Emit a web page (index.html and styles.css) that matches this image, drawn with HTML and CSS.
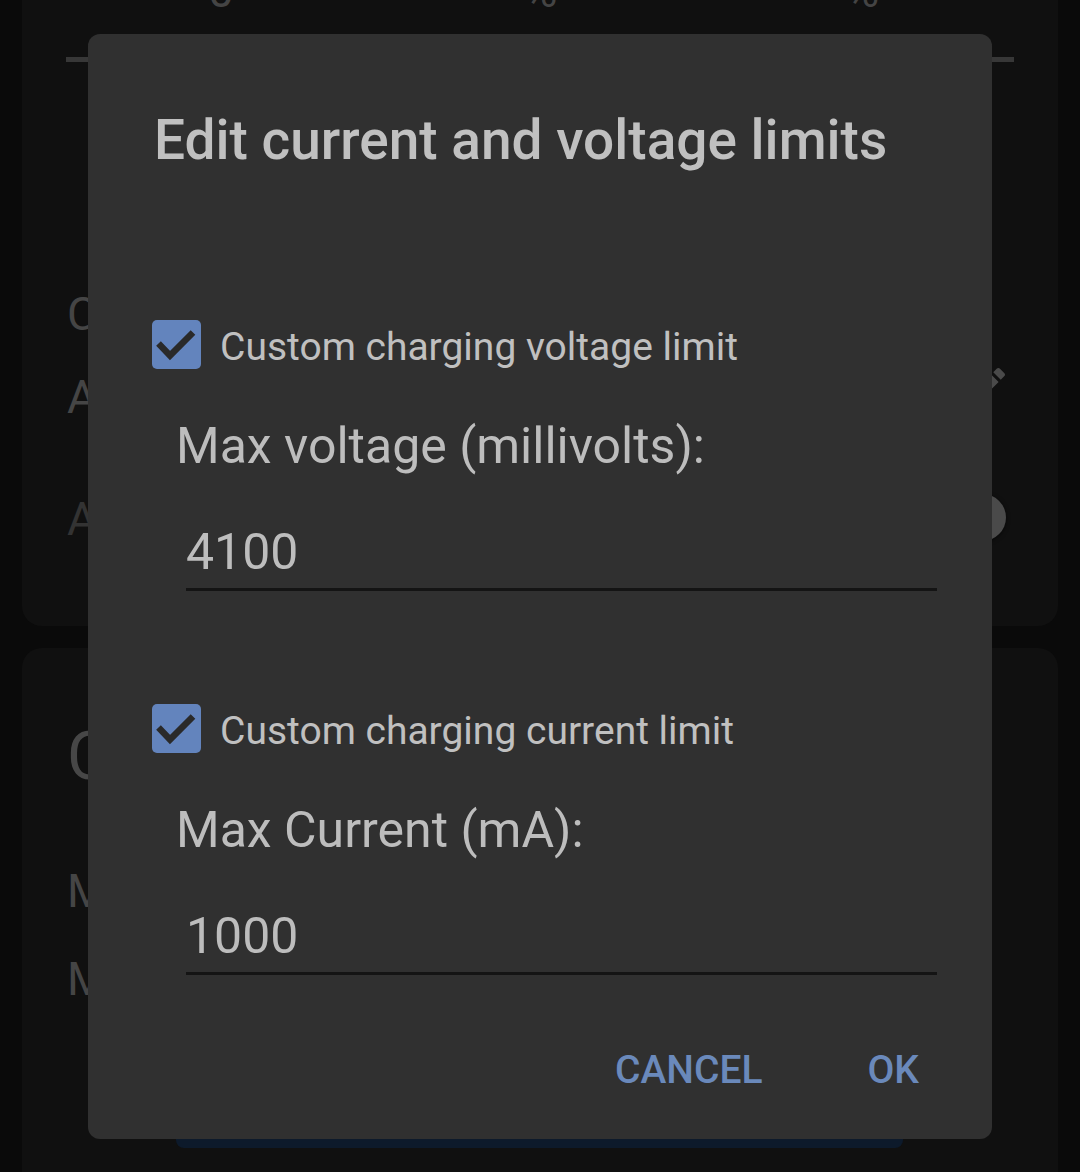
FILE: index.html
```html
<!DOCTYPE html>
<html lang="en">
<head>
<meta charset="utf-8">
<title>Edit current and voltage limits</title>
<link rel="stylesheet" href="styles.css">
</head>
<body>
<div class="page">
  <section class="card card-top">
    <div class="stats">
      <span class="stat s1">0</span>
      <span class="stat s2">%</span>
      <span class="stat s3">%</span>
    </div>
    <div class="divider"></div>
    <div class="row r1"><span>Charge limit</span></div>
    <div class="row r2">
      <span>Automatic limit</span>
      <svg class="edit-icon" viewBox="0 0 24 24" width="48" height="48"><path d="M3 17.25V21h3.75L17.81 9.94l-3.75-3.75L3 17.25zM20.71 7.04c.39-.39.39-1.02 0-1.41l-2.34-2.34c-.39-.39-1.02-.39-1.41 0l-1.830 1.83 3.75 3.75 1.83-1.83z" fill="#4a4a4a"/></svg>
    </div>
    <div class="row r3 disabled">
      <span>Auto-resume charging</span>
      <span class="knob"></span>
    </div>
  </section>

  <section class="card card-bottom">
    <h2 class="heading">Current and voltage</h2>
    <div class="row r4"><span>Max voltage</span></div>
    <div class="row r5"><span>Max current</span></div>
    <div class="blue-btn"></div>
  </section>
</div>

<div class="dialog">
  <h1 class="title">Edit current and voltage limits</h1>

  <div class="check-row first">
    <span class="box"><svg viewBox="0 0 49 49" width="49" height="49"><path d="M6.5 23.5 L18 35.5 L41 12.5" fill="none" stroke="#2a2a2a" stroke-width="6.5"/></svg></span>
    <span class="check-label">Custom charging voltage limit</span>
  </div>
  <div class="field-label">Max voltage (millivolts):</div>
  <div class="field">4100</div>

  <div class="check-row second">
    <span class="box"><svg viewBox="0 0 49 49" width="49" height="49"><path d="M6.5 23.5 L18 35.5 L41 12.5" fill="none" stroke="#2a2a2a" stroke-width="6.5"/></svg></span>
    <span class="check-label">Custom charging current limit</span>
  </div>
  <div class="field-label">Max Current (mA):</div>
  <div class="field">1000</div>

  <div class="actions">
    <span class="action cancel">CANCEL</span>
    <span class="action ok">OK</span>
  </div>
</div>
</body>
</html>
```

FILE: styles.css
```css
html, body {
  margin: 0;
  padding: 0;
  background: #0a0a0a;
  height: 1172px;
  overflow: hidden;
  font-family: Roboto, "Noto Sans", sans-serif;
}

.page {
  padding: 0 22px;
}

.card {
  background: #101010;
}

.card-top {
  height: 626px;
  border-radius: 0 0 20px 20px;
  overflow: hidden;
}

.stats {
  display: flex;
  height: 46px;
  margin-top: -32px;
  font-size: 46px;
  line-height: 46px;
  color: #444;
  position: relative;
}

.stat.s1 { margin-left: 186px; }
.stat.s2 { margin-left: 290px; }
.stat.s3 { margin-left: 288px; }

.divider {
  height: 5px;
  margin: 43px 44px 0;
  background: #373737;
}

.row {
  display: flex;
  justify-content: space-between;
  align-items: flex-start;
  padding: 0 47px 0 45px;
  height: 46px;
  font-size: 46px;
  line-height: 46px;
  color: #454545;
}

.r1 { margin-top: 229px; }
.r2 { margin-top: 37px; }
.r3 { margin-top: 76px; }
.disabled { color: #333; }

.edit-icon {
  margin-top: -12px;
}

.knob {
  width: 47px;
  height: 47px;
  border-radius: 50%;
  background: #4a4a4a;
  box-shadow: 0 1px 4px rgba(0,0,0,0.6);
  margin-right: 5px;
  margin-top: -2px;
}

.card-bottom {
  margin-top: 22px;
  height: 560px;
  border-radius: 20px 20px 0 0;
  padding-top: 76px;
  box-sizing: border-box;
}

.heading {
  margin: 0;
  padding: 0 45px;
  height: 66px;
  font-size: 66px;
  line-height: 66px;
  font-weight: 400;
  color: #474747;
}

.r4 { margin-top: 78px; }
.r5 { margin-top: 42px; }

.blue-btn {
  margin: 46px 0 0 154px;
  width: 727px;
  height: 100px;
  border-radius: 8px;
  background: #0d1a2b;
}

.dialog {
  position: absolute;
  left: 88px;
  top: 34px;
  width: 904px;
  height: 1105px;
  box-sizing: border-box;
  background: #303030;
  border-radius: 12px;
  padding: 78px 55px 0 64px;
  color: #bdbdbd;
}

.title {
  margin: 0 0 0 2px;
  font-size: 55px;
  line-height: 56px;
  height: 56px;
  font-weight: 500;
  color: #c0c0c0;
  white-space: nowrap;
}

.check-row {
  display: flex;
  align-items: flex-start;
  height: 49px;
}

.check-row.first { margin-top: 152px; }
.check-row.second { margin-top: 113px; }

.box {
  width: 49px;
  height: 49px;
  border-radius: 5px;
  background: #6384bd;
  flex: none;
}

.box svg { display: block; }

.check-label {
  margin: 3px 0 0 19px;
  font-size: 39px;
  line-height: 49px;
  color: #c0c0c0;
  white-space: nowrap;
}

.field-label {
  margin: 53px 0 0 24px;
  font-size: 50px;
  line-height: 49px;
  height: 49px;
  color: #bdbdbd;
  white-space: nowrap;
}

.field {
  margin: 56px 0 0 34px;
  font-size: 50px;
  line-height: 50px;
  height: 50px;
  padding-bottom: 11px;
  border-bottom: 3px solid #141414;
  color: #bdbdbd;
}

.actions {
  display: flex;
  justify-content: flex-end;
  margin-top: 76px;
  margin-right: 18px;
  gap: 105px;
  font-size: 39px;
  line-height: 39px;
  font-weight: 500;
  color: #6a89bb;
}
```
